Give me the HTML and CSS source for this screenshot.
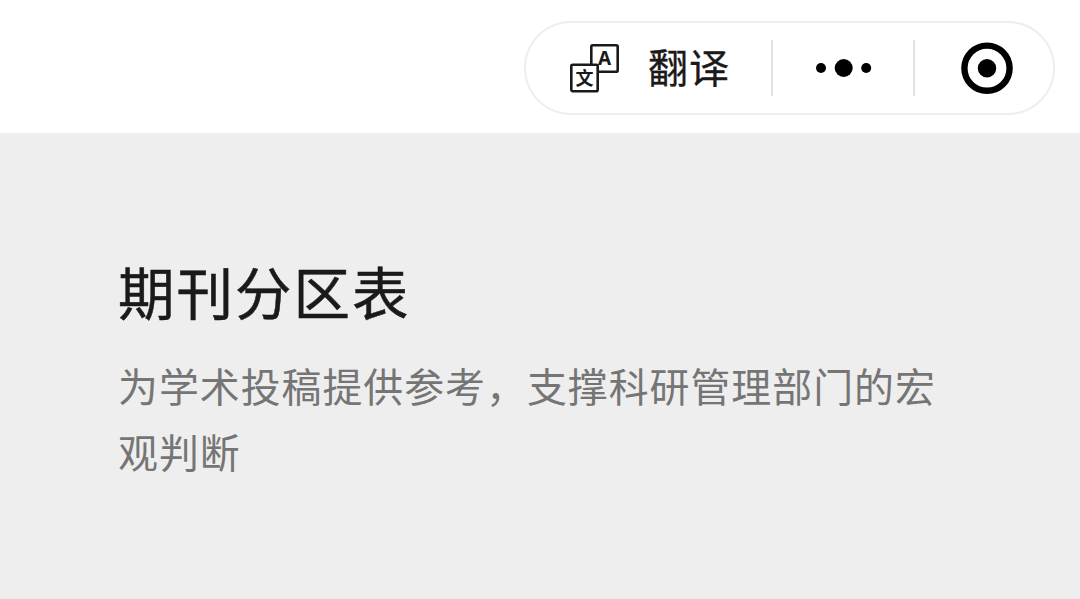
FILE: index.html
```
<!DOCTYPE html>
<html lang="zh-CN">

<head>
  <meta charset="UTF-8" />
  <meta name="viewport" content="width=device-width, initial-scale=1.0" />
  <title>期刊分区表</title>
  <link rel="stylesheet" href="styles.css">
</head>

<body>
  <header class="navbar">
    <div class="capsule">
      <button class="capsule_btn translate_btn" type="button">
        <svg class="translate_icon" width="52" height="54" viewBox="0 0 52 54">
          <rect class="tile" x="22.3" y="4.3" width="26.4" height="26.4" rx="1.5" />
          <text class="tile_latin" x="35.7" y="24.4">A</text>
          <rect class="tile" x="2.3" y="23.8" width="26.4" height="26.4" rx="1.5" />
          <text class="tile_han" x="15.6" y="43.6">文</text>
        </svg>
        <span class="translate_label">翻译</span>
      </button>

      <button class="capsule_btn menu_btn" type="button" aria-label="更多">
        <svg width="58" height="20" viewBox="0 0 58 20">
          <circle cx="6" cy="10" r="5" />
          <circle cx="28.7" cy="10" r="9" />
          <circle cx="51.2" cy="10" r="5" />
        </svg>
      </button>

      <button class="capsule_btn close_btn" type="button" aria-label="关闭">
        <svg width="54" height="54" viewBox="0 0 54 54">
          <circle class="ring" cx="27" cy="27.2" r="22.6" />
          <circle cx="27" cy="27.2" r="9.2" />
        </svg>
      </button>
    </div>
  </header>

  <main class="content">
    <h1 class="title">期刊分区表</h1>
    <p class="desc">为学术投稿提供参考，支撑科研管理部门的宏观判断</p>
  </main>
</body>

</html>
```
FILE: styles.css
```
* {
  box-sizing: border-box;
}

body {
  display: flex;
  flex-direction: column;
  height: 100vh;
  margin: 0;
  overflow: hidden;
  font-family: "Noto Sans CJK SC", sans-serif;
  background: #eee;
}

/* Top bar */
.navbar {
  display: flex;
  justify-content: flex-end;
  flex: none;
  height: 133px;
  padding: 21px 25px 0 0;
  background: #fff;
}

.capsule {
  display: flex;
  align-items: center;
  width: 531px;
  height: 94px;
  border: 2px solid #eee;
  border-radius: 47px;
}

.capsule_btn {
  display: flex;
  align-items: center;
  height: 56px;
  padding: 0;
  border: 0;
  background: transparent;
  font-family: inherit;
}

.translate_btn {
  width: 245px;
  padding-left: 43px;
}

.menu_btn {
  width: 142px;
  padding-left: 42px;
  border-left: 2px solid #e2e2e2;
}

.close_btn {
  flex: 1;
  padding-left: 45px;
  border-left: 2px solid #e2e2e2;
}

.translate_icon {
  margin-right: 27px;
}

.tile {
  fill: #fff;
  stroke: #1a1a1a;
  stroke-width: 2.6;
}

.tile_latin,
.tile_han {
  fill: #1a1a1a;
  font-weight: bold;
  text-anchor: middle;
}

.tile_latin {
  font-family: "Noto Sans", sans-serif;
  font-size: 19px;
}

.tile_han {
  font-size: 18px;
}

.translate_label {
  padding-bottom: 4px;
  color: #1a1a1a;
  font-size: 40px;
  letter-spacing: 1px;
  line-height: 56px;
  -webkit-text-stroke: 0.3px #1a1a1a;
}

.ring {
  fill: none;
  stroke: #000;
  stroke-width: 6.4;
}

/* Page heading */
.content {
  flex: 1;
  padding: 115px 118px 0;
}

.title {
  margin: 0;
  color: #1a1a1a;
  font-size: 56.5px;
  font-weight: normal;
  letter-spacing: 2px;
  line-height: 84px;
  -webkit-text-stroke: 0.5px #1a1a1a;
}

.desc {
  width: 830px;
  margin: 20px 0 0;
  color: #757575;
  font-size: 39.9px;
  letter-spacing: 1px;
  line-height: 66px;
}
```
